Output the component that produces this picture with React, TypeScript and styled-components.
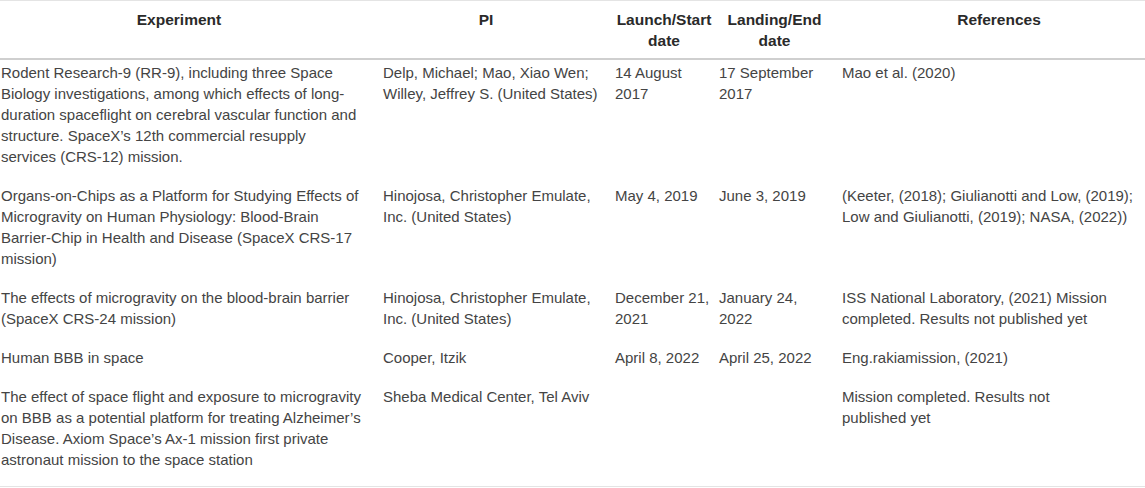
import React from "react";
import styled, { createGlobalStyle } from "styled-components";

const GlobalStyle = createGlobalStyle`
  html, body {
    margin: 0;
    padding: 0;
    background: #ffffff;
  }
  body {
    font-family: "Liberation Sans", Arial, Helvetica, sans-serif;
  }
`;

const Table = styled.table`
  width: 1145px;
  table-layout: fixed;
  border-collapse: collapse;
  border-top: 1px solid #e4e4e4;
  border-bottom: 1px solid #e4e4e4;
  font-size: 15px;
  line-height: 21px;
  color: #444444;
`;

const Col = styled.col<{ $width: number }>`
  width: ${(p) => p.$width}px;
`;

const HeadRow = styled.tr`
  border-bottom: 2px solid #cfcfcf;
`;

// header labels sit a little off the column centre in the original
const HeadCell = styled.th<{ $left: number; $right: number }>`
  padding: 8px ${(p) => p.$right}px 7px ${(p) => p.$left}px;
  text-align: center;
  vertical-align: top;
  font-weight: 700;
  font-size: 15.5px;
  color: #2a2a2a;
`;

const Cell = styled.td<{ $first?: boolean }>`
  padding: 2px 6px 16px ${(p) => (p.$first ? "1px" : "6px")};
  vertical-align: top;
  text-align: left;
  white-space: nowrap;
`;

type Mission = {
  experiment: string[];
  pi: string[];
  start: string[];
  end: string[];
  refs: string[];
};

const columns = [
  { title: ["Experiment"], width: 377, left: 1, right: 20 },
  { title: ["PI"], width: 232, left: 6, right: 20 },
  { title: ["Launch/Start", "date"], width: 104, left: 6, right: 0 },
  { title: ["Landing/End", "date"], width: 123, left: 6, right: 6 },
  { title: ["References"], width: 309, left: 17, right: 0 },
];

const missions: Mission[] = [
  {
    experiment: [
      "Rodent Research-9 (RR-9), including three Space",
      "Biology investigations, among which effects of long-",
      "duration spaceflight on cerebral vascular function and",
      "structure. SpaceX\u2019s 12th commercial resupply",
      "services (CRS-12) mission.",
    ],
    pi: ["Delp, Michael; Mao, Xiao Wen;", "Willey, Jeffrey S. (United States)"],
    start: ["14 August", "2017"],
    end: ["17 September", "2017"],
    refs: ["Mao et al. (2020)"],
  },
  {
    experiment: [
      "Organs-on-Chips as a Platform for Studying Effects of",
      "Microgravity on Human Physiology: Blood-Brain",
      "Barrier-Chip in Health and Disease (SpaceX CRS-17",
      "mission)",
    ],
    pi: ["Hinojosa, Christopher Emulate,", "Inc. (United States)"],
    start: ["May 4, 2019"],
    end: ["June 3, 2019"],
    refs: [
      "(Keeter, (2018); Giulianotti and Low, (2019);",
      "Low and Giulianotti, (2019); NASA, (2022))",
    ],
  },
  {
    experiment: [
      "The effects of microgravity on the blood-brain barrier",
      "(SpaceX CRS-24 mission)",
    ],
    pi: ["Hinojosa, Christopher Emulate,", "Inc. (United States)"],
    start: ["December 21,", "2021"],
    end: ["January 24,", "2022"],
    refs: [
      "ISS National Laboratory, (2021) Mission",
      "completed. Results not published yet",
    ],
  },
  {
    experiment: ["Human BBB in space"],
    pi: ["Cooper, Itzik"],
    start: ["April 8, 2022"],
    end: ["April 25, 2022"],
    refs: ["Eng.rakiamission, (2021)"],
  },
  {
    experiment: [
      "The effect of space flight and exposure to microgravity",
      "on BBB as a potential platform for treating Alzheimer\u2019s",
      "Disease. Axiom Space\u2019s Ax-1 mission first private",
      "astronaut mission to the space station",
    ],
    pi: ["Sheba Medical Center, Tel Aviv"],
    start: [],
    end: [],
    refs: ["Mission completed. Results not", "published yet"],
  },
];

function Lines({ lines }: { lines: string[] }): JSX.Element {
  return (
    <>
      {lines.map((line, i) => (
        <React.Fragment key={i}>
          {i > 0 && <br />}
          {line}
        </React.Fragment>
      ))}
    </>
  );
}

function MissionsTable(): JSX.Element {
  return (
    <Table>
      <colgroup>
        {columns.map((c) => (
          <Col key={c.title[0]} $width={c.width} />
        ))}
      </colgroup>
      <thead>
        <HeadRow>
          {columns.map((c) => (
            <HeadCell key={c.title[0]} $left={c.left} $right={c.right}>
              <Lines lines={c.title} />
            </HeadCell>
          ))}
        </HeadRow>
      </thead>
      <tbody>
        {missions.map((m, i) => (
          <tr key={i}>
            <Cell $first>
              <Lines lines={m.experiment} />
            </Cell>
            <Cell>
              <Lines lines={m.pi} />
            </Cell>
            <Cell>
              <Lines lines={m.start} />
            </Cell>
            <Cell>
              <Lines lines={m.end} />
            </Cell>
            <Cell>
              <Lines lines={m.refs} />
            </Cell>
          </tr>
        ))}
      </tbody>
    </Table>
  );
}

export default function App(): JSX.Element {
  return (
    <>
      <GlobalStyle />
      <MissionsTable />
    </>
  );
}
